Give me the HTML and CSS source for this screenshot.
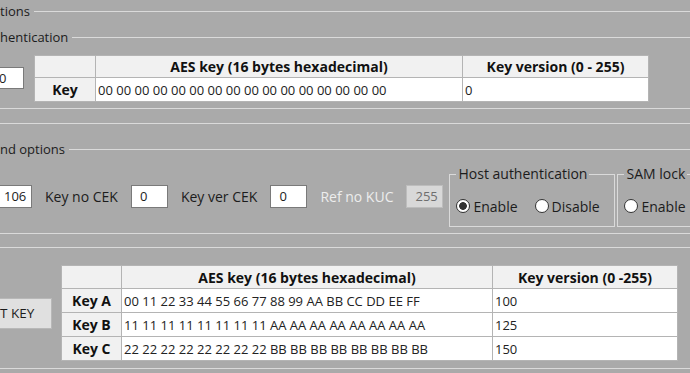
FILE: index.html
```html
<!DOCTYPE html>
<html lang="en">
<head>
  <meta charset="UTF-8" />
  <title>Key options</title>
  <link rel="stylesheet" href="styles.css">
</head>
<body>
  <div class="form">
    <!-- Options / Authentication -->
    <div class="legend-row"><span class="legend">tions</span><span class="line"></span></div>
    <div class="legend-row auth-title"><span class="legend">hentication</span><span class="line"></span></div>

    <div class="auth-row">
      <div class="textbox auth-box">0</div>
      <table class="grid grid-auth">
        <tr class="head">
          <th class="rowhead"></th>
          <th class="col-key">AES key (16 bytes hexadecimal)</th>
          <th class="col-ver">Key version (0 - 255)</th>
        </tr>
        <tr>
          <th class="rowhead">Key</th>
          <td>00 00 00 00 00 00 00 00 00 00 00 00 00 00 00 00</td>
          <td>0</td>
        </tr>
      </table>
    </div>

    <div class="rule r-auth"></div>
    <div class="rule r-options"></div>

    <!-- Command options -->
    <div class="legend-row cmd-title"><span class="legend">nd options</span><span class="line"></span></div>

    <div class="cmd-row">
      <div class="fields">
        <div class="textbox first">106</div>
        <span class="label">Key no CEK</span>
        <div class="textbox">0</div>
        <span class="label">Key ver CEK</span>
        <div class="textbox">0</div>
        <span class="label disabled">Ref no KUC</span>
        <div class="textbox disabled">255</div>
      </div>

      <fieldset class="group host">
        <legend>Host authentication</legend>
        <div class="radios">
          <label class="radio"><span class="dot checked"></span>Enable</label>
          <label class="radio"><span class="dot"></span>Disable</label>
        </div>
      </fieldset>

      <fieldset class="group sam">
        <legend>SAM lock</legend>
        <div class="radios">
          <label class="radio"><span class="dot"></span>Enable</label>
        </div>
      </fieldset>
    </div>

    <div class="rule r-cmd"></div>
    <div class="rule r-keys"></div>

    <!-- Keys -->
    <div class="keys-row">
      <button class="btn">T KEY</button>
      <table class="grid grid-keys">
        <tr class="head">
          <th class="rowhead"></th>
          <th class="col-key">AES key (16 bytes hexadecimal)</th>
          <th class="col-ver">Key version (0 -255)</th>
        </tr>
        <tr>
          <th class="rowhead">Key A</th>
          <td>00 11 22 33 44 55 66 77 88 99 AA BB CC DD EE FF</td>
          <td>100</td>
        </tr>
        <tr>
          <th class="rowhead">Key B</th>
          <td>11 11 11 11 11 11 11 11 AA AA AA AA AA AA AA AA</td>
          <td>125</td>
        </tr>
        <tr>
          <th class="rowhead">Key C</th>
          <td>22 22 22 22 22 22 22 22 BB BB BB BB BB BB BB BB</td>
          <td>150</td>
        </tr>
      </table>
    </div>

    <div class="rule r-bottom"></div>
  </div>
</body>
</html>
```

FILE: styles.css
```css
html, body {
  margin: 0;
  padding: 0;
  background: #aaaaaa;
  font-family: "Open Sans", "Noto Sans", sans-serif;
  font-size: 13px;
  color: #1c1c1c;
}

.form {
  width: 690px;
  height: 373px;
  overflow: hidden;
}

/* Group titles with the line running to the right */
.legend-row {
  display: flex;
  align-items: center;
  height: 22px;
  line-height: 18px;
}

.legend-row .line {
  flex: 1;
  border-top: 1px solid #dadada;
  margin-left: 4px;
}

.auth-title { margin-top: 4px; }
.cmd-title { margin-top: 14px; }

.rule {
  border-top: 1px solid #dadada;
}

.r-auth { margin-top: 6px; }
.r-options { margin-top: 14px; }
.r-cmd { margin-top: 6px; }
.r-keys { margin-top: 13px; }
.r-bottom { margin-top: 7px; }

/* Text boxes */
.textbox {
  box-sizing: border-box;
  flex-shrink: 0;
  width: 37px;
  height: 23px;
  line-height: 21px;
  padding-left: 8px;
  background: #fff;
  border: 1px solid #7a7a7a;
  white-space: nowrap;
}

.textbox.disabled {
  background: #d8d8d8;
  border-color: #bdbdbd;
  color: #6e6e6e;
}

.label.disabled {
  color: #ededed;
}

/* Authentication row */
.auth-row {
  display: flex;
  align-items: flex-start;
  gap: 10px;
  margin-top: 7px;
  margin-left: -13px;
}

.auth-box {
  height: 22px;
  line-height: 20px;
  margin-top: 12px;
  padding-left: 11px;
}

/* Grids */
.grid {
  flex-shrink: 0;
  border-collapse: collapse;
  table-layout: fixed;
  background: #fff;
}

.grid th, .grid td {
  border: 1px solid #b4b4b4;
  padding: 0 2px;
  white-space: nowrap;
  overflow: hidden;
}

.grid th {
  background: #f1f1f1;
  font-weight: bold;
  font-size: 14px;
  text-align: center;
  color: #111;
}

.grid td {
  text-align: left;
  color: #222;
}

.grid-auth .head th { height: 21px; }
.grid-auth td, .grid-auth tr:not(.head) th { height: 23px; }
.grid-auth .rowhead { width: 56px; }
.grid-auth .col-key { width: 362px; }
.grid-auth .col-ver { width: 181px; }

.grid-keys .head th { height: 22px; }
.grid-keys td, .grid-keys tr:not(.head) th { height: 23px; }
.grid-keys .rowhead { width: 55px; }
.grid-keys .col-key { width: 366px; }
.grid-keys .col-ver { width: 180px; }

/* Command options row */
.cmd-row {
  display: flex;
  align-items: flex-start;
  margin-top: 5px;
  margin-left: -5px;
}

.fields {
  display: flex;
  flex-shrink: 0;
  align-items: center;
  gap: 13px;
  margin-top: 20px;
  margin-right: 6px;
}

.label {
  font-size: 14px;
  white-space: nowrap;
}

.group {
  flex-shrink: 0;
  margin: 0;
  padding: 14px 0 11px 6px;
  border: 1px solid #dadada;
  min-width: 0;
}

.group legend {
  padding: 0 2px;
  line-height: 18px;
  font-size: 14px;
}

.host {
  width: 158px;
  margin-right: 2px;
}

.sam {
  width: 120px;
}

.radios {
  display: flex;
  gap: 17px;
  height: 18px;
  align-items: center;
}

.radio {
  display: flex;
  align-items: center;
  gap: 3px;
  font-size: 14px;
}

.dot {
  box-sizing: border-box;
  width: 14px;
  height: 14px;
  border: 1px solid #333;
  border-radius: 50%;
  background: #fff;
}

.dot.checked {
  background: radial-gradient(circle, #333 0 3.5px, #fff 4.2px);
}

/* Keys row */
.keys-row {
  display: flex;
  align-items: center;
  gap: 9px;
  margin-top: 17px;
}

.btn {
  box-sizing: border-box;
  flex-shrink: 0;
  width: 52px;
  height: 31px;
  padding: 0;
  background: #e0e0e0;
  border: 1px solid #b8b8b8;
  border-left: none;
  font-family: inherit;
  font-size: 13.5px;
  color: #1c1c1c;
  text-align: left;
}
```
